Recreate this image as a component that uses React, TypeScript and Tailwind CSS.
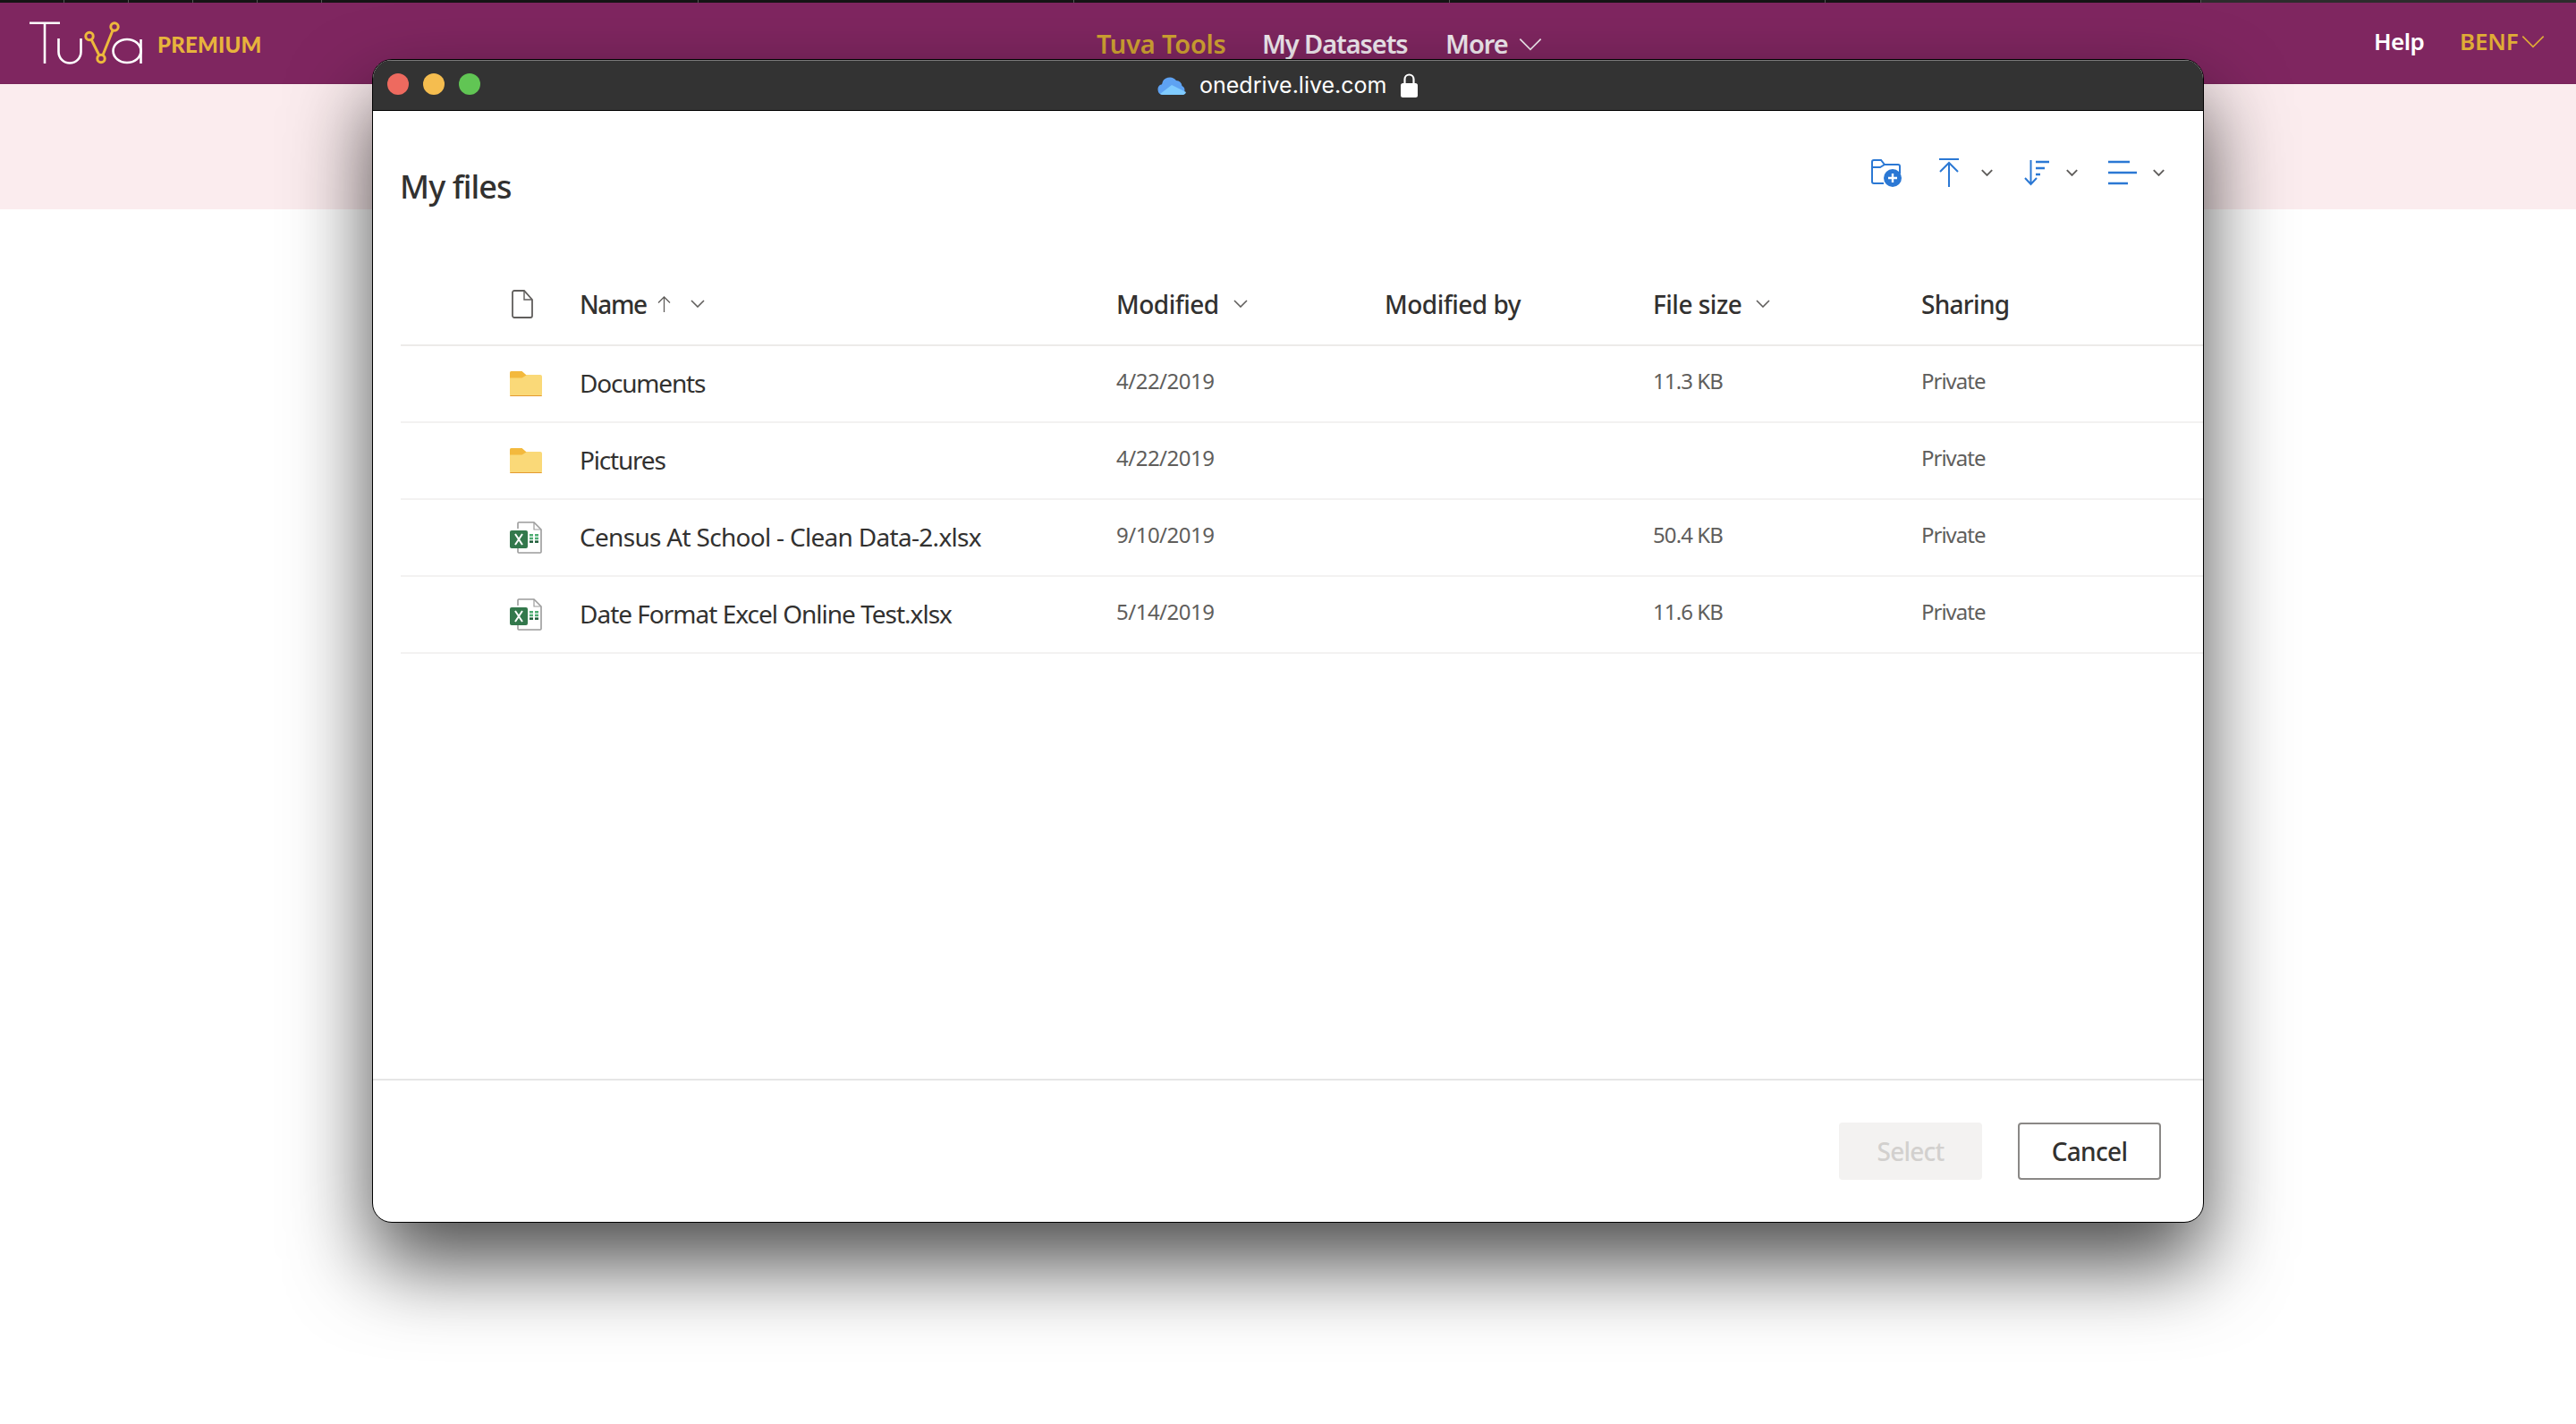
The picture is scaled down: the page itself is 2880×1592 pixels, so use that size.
import React from "react";

const seg = "font-['Noto_Sans','Open_Sans',sans-serif]";

function Chevron({ className, color = "#605e5c", w = 1.6 }: { className: string; color?: string; w?: number }) {
  return (
    <svg viewBox="0 0 16 9" className={className} fill="none">
      <path d="M1 1l7 7 7-7" stroke={color} strokeWidth={w} />
    </svg>
  );
}

function Logo() {
  return (
    <svg viewBox="0 0 130 50" className="w-[130px] h-[50px]" fill="none">
      <g stroke="#fff" strokeWidth="2.6">
        <path d="M1 1.800H35M18 1.800V47" />
        <path d="M33.500 19v15a12.500 12.500 0 0 0 25 0V19" />
        <ellipse cx="110" cy="33" rx="15.500" ry="13" />
        <path d="M125.500 20V47" />
      </g>
      <g stroke="#edb93c" strokeWidth="3">
        <path d="M70 20L79 38M83 37.500L94 10" />
        <circle cx="68" cy="16.500" r="4.200" />
        <circle cx="81" cy="41.500" r="4.200" />
        <circle cx="96" cy="6" r="4.200" />
      </g>
    </svg>
  );
}

function Cloud() {
  return (
    <svg viewBox="0 0 32 21" className="w-[32px] h-[21px]">
      <path d="M6 21a6 6 0 0 1-1-11.800A9 9 0 0 1 21 5a7 7 0 0 1 6.500 6A5.500 5.500 0 0 1 27 21z" fill="#5ea2f2" />
      <path d="M3 20l13-10 16 8a4 4 0 0 1-5 3H6a5 5 0 0 1-3-1z" fill="#7fcbff" />
    </svg>
  );
}

function Lock() {
  return (
    <svg viewBox="0 0 19 27" className="w-[19px] h-[27px]" fill="none">
      <path d="M4.500 12V6.500a5 5 0 0 1 10 0V12" stroke="#fff" strokeWidth="2.200" />
      <rect x="0" y="11" width="19" height="16" rx="2.500" fill="#fff" />
    </svg>
  );
}

function FolderIcon() {
  return (
    <svg viewBox="0 0 36 28" className="w-[36px] h-[28px]">
      <path d="M0 2a2 2 0 0 1 2-2h11l5 4h16a2 2 0 0 1 2 2v20a2 2 0 0 1-2 2H2a2 2 0 0 1-2-2z" fill="#fad978" />
      <path d="M0 2a2 2 0 0 1 2-2h11.500l5 4.500-5 3H0z" fill="#f3b93d" />
      <path d="M0 27h36v0a1 1 0 0 1-1 1H1a1 1 0 0 1-1-1z" fill="#e39a30" />
    </svg>
  );
}

function ExcelIcon() {
  return (
    <svg viewBox="0 0 36 36" className="w-[36px] h-[36px]" fill="none">
      <path d="M9 8V2a1 1 0 0 1 1-1h17l8 8v25a1 1 0 0 1-1 1H10a1 1 0 0 1-1-1v-4" stroke="#9c9c9c" strokeWidth="1.600" />
      <path d="M27 1v8h8" stroke="#9c9c9c" strokeWidth="1.200" />
      <g fill="#4eac72">
        <rect x="22" y="14" width="4" height="2.500" />
        <rect x="28" y="14" width="4" height="2.500" />
        <rect x="22" y="17.700" width="4" height="2.500" />
        <rect x="28" y="17.700" width="4" height="2.500" />
      </g>
      <g fill="#1d5c38">
        <rect x="22" y="21.400" width="4" height="2.500" />
        <rect x="28" y="21.400" width="4" height="2.500" />
      </g>
      <rect x="0" y="10" width="20" height="20" rx="2" fill="#33784c" />
      <path d="M6 14l8 12M14 14L6 26" stroke="#fff" strokeWidth="2" />
    </svg>
  );
}

function DocIcon() {
  return (
    <svg viewBox="0 0 24 32" className="w-[24px] h-[32px]" fill="none">
      <path d="M1 3a2 2 0 0 1 2-2h11l9 10v18a2 2 0 0 1-2 2H3a2 2 0 0 1-2-2z" stroke="#605e5c" strokeWidth="1.800" />
      <path d="M14 1v10h9" stroke="#605e5c" strokeWidth="1.400" />
    </svg>
  );
}

function ToolFolder() {
  return (
    <svg viewBox="0 0 34 31" className="w-[34px] h-[31px]" fill="none">
      <path d="M14 27H3a2 2 0 0 1-2-2V3a2 2 0 0 1 2-2h8l4 5h15a2 2 0 0 1 2 2v8" stroke="#2b78d4" strokeWidth="2" />
      <path d="M1 9h9l5-3" stroke="#2b78d4" strokeWidth="2" />
      <circle cx="24" cy="21" r="10" fill="#2b78d4" />
      <path d="M24 16v10M19 21h10" stroke="#fff" strokeWidth="2.400" />
    </svg>
  );
}

function ToolUpload() {
  return (
    <svg viewBox="0 0 24 32" className="w-[24px] h-[32px]" fill="none">
      <path d="M1 1h22M12 32V5M2 15L12 5l10 10" stroke="#2b78d4" strokeWidth="2" />
    </svg>
  );
}

function ToolSort() {
  return (
    <svg viewBox="0 0 28 29" className="w-[28px] h-[29px]" fill="none">
      <path d="M7.500 0v27M1 20l6.500 7 6.500-7" stroke="#2b78d4" strokeWidth="2" />
      <path d="M13 2h15M13 9h10M13 16h5" stroke="#2b78d4" strokeWidth="2.400" />
    </svg>
  );
}

function ToolList() {
  return (
    <svg viewBox="0 0 32 28" className="w-[32px] h-[28px]" fill="none">
      <path d="M0 2h24M0 14h32M0 26h22" stroke="#2b78d4" strokeWidth="2.400" />
    </svg>
  );
}

const rows = [
  { name: "Documents", icon: "folder", date: "4/22/2019", size: "11.3 KB", track: "tracking-[-1.2px]" },
  { name: "Pictures", icon: "folder", date: "4/22/2019", size: "", track: "tracking-[-1.2px]" },
  { name: "Census At School - Clean Data-2.xlsx", icon: "excel", date: "9/10/2019", size: "50.4 KB", track: "tracking-[-0.7px]" },
  { name: "Date Format Excel Online Test.xlsx", icon: "excel", date: "5/14/2019", size: "11.6 KB", track: "tracking-[-1px]" },
];

const ticks = [71, 143, 215, 287, 359, 780, 1200, 1620, 2040, 2460];

export default function App() {
  return (
    <div className={`relative w-[2880px] h-[1592px] overflow-hidden bg-white ${seg}`}>
      <div className="h-[3px] bg-[#141414] flex">
        {ticks.map((t, i) => (
          <div key={t} className="w-px h-[3px] bg-[#555555] shrink-0" style={{ marginLeft: i === 0 ? t : t - ticks[i - 1] - 1 }} />
        ))}
        <div className="flex-1 h-[3px] bg-[#2c2c2c]" />
      </div>
      <header className="h-[91px] bg-[#7f2660] border-b border-[#782359] flex items-start relative">
        <div className="ml-[32px] mt-[21px] flex items-start">
          <Logo />
          <span className="ml-[14px] mt-[10px] text-[24px] leading-[32px] font-black text-[#e7b33c] font-['Lato',sans-serif] tracking-[0.2px]">PREMIUM</span>
        </div>
        <nav className="absolute left-[1226px] top-[22px] flex items-center text-[29px] leading-[48px] font-semibold text-[#f0e9ee]">
          <span className="w-[185px] text-[#d0a232] tracking-[-0.2px]">Tuva Tools</span>
          <span className="w-[205px] tracking-[-1.1px]">My Datasets</span>
          <span className="w-[81px] tracking-[-1px]">More</span>
          <Chevron className="w-[28px] h-[15px]" color="#f0e9ee" w={1} />
        </nav>
        <div className="absolute left-[2654px] top-[19px] flex items-center text-[26px] leading-[48px] font-semibold text-white">
          <span className="w-[96px] tracking-[-0.6px]">Help</span>
          <span className="w-[68px] text-[#dfac36] tracking-[-0.2px]">BENF</span>
          <Chevron className="w-[28px] h-[15px]" color="#dfac36" w={1} />
        </div>
      </header>
      <div className="h-[140px] bg-[#fbecee]" />

      <div className="absolute left-[416px] top-[66px] w-[2048px] h-[1301px] rounded-[22px] border border-black bg-white overflow-hidden flex flex-col shadow-[0_46px_92px_rgba(0,0,0,0.7)]">
        <div className="h-[56px] bg-[#333333] border-t border-[#7a7a7a] flex items-center pb-[3px] relative shrink-0">
          <div className="ml-[16px] w-[24px] h-[24px] rounded-full bg-[#ee6a5f]" />
          <div className="ml-[16px] w-[24px] h-[24px] rounded-full bg-[#f5bd4f]" />
          <div className="ml-[16px] w-[24px] h-[24px] rounded-full bg-[#61c554]" />
          <div className="absolute left-[877px] top-[9px] flex items-center text-white h-[36px]">
            <Cloud />
            <span className="ml-[15px] w-[225px] text-[25px] leading-[36px] font-['Inter',sans-serif]">onedrive.live.com</span>
            <Lock />
          </div>
        </div>
        <div className="h-[1px] bg-black shrink-0" />
        <div className="flex-1 flex flex-col relative">
          <div className="h-[181px] relative shrink-0">
            <h1 className="absolute left-[30px] top-[61px] text-[36px] leading-[48px] font-medium text-[#323130] tracking-[-0.9px]">My files</h1>
            <div className="absolute right-[43px] top-[53px] flex items-center">
              <ToolFolder />
              <span className="ml-[41px]"><ToolUpload /></span>
              <Chevron className="ml-[24px] w-[13px] h-[8px]" w={2.400} />
              <span className="ml-[35px]"><ToolSort /></span>
              <Chevron className="ml-[19px] w-[13px] h-[8px]" w={2.400} />
              <span className="ml-[34px]"><ToolList /></span>
              <Chevron className="ml-[18px] w-[13px] h-[8px]" w={2.400} />
            </div>
          </div>
          <div className="ml-[31px] flex flex-col text-[#323130]">
            <div className="h-[82px] border-b-2 border-[#edebe9] pb-[11px] flex items-center text-[28px] font-medium tracking-[-0.5px]">
              <div className="w-[124px]" />
              <div className="w-[76px]"><DocIcon /></div>
              <div className="w-[600px] flex items-center">
                <span className="tracking-[-1.4px]">Name</span>
                <svg viewBox="0 0 15 18" className="ml-[12px] w-[15px] h-[18px]" fill="none"><path d="M7.500 18V1M1 7.500L7.500 1 14 7.500" stroke="#605e5c" strokeWidth="1.300" /></svg>
                <Chevron className="ml-[22px] w-[16px] h-[9px]" />
              </div>
              <div className="w-[300px] flex items-center"><span>Modified</span><Chevron className="ml-[16px] w-[16px] h-[9px]" /></div>
              <div className="w-[300px]">Modified by</div>
              <div className="w-[300px] flex items-center"><span>File size</span><Chevron className="ml-[16px] w-[16px] h-[9px]" /></div>
              <div className="tracking-[-0.7px]">Sharing</div>
            </div>
            {rows.map((r) => (
              <div key={r.name} className="h-[86px] border-b-2 border-[#f3f2f1] flex items-center">
                <div className="w-[122px]" />
                <div className="w-[78px] flex">{r.icon === "folder" ? <FolderIcon /> : <ExcelIcon />}</div>
                <div className={`w-[600px] text-[28px] -mt-[3px] ${r.track}`}>{r.name}</div>
                <div className="w-[300px] text-[24px] text-[#605e5c] tracking-[-0.5px] -mt-[6px]">{r.date}</div>
                <div className="w-[300px]" />
                <div className="w-[300px] text-[24px] text-[#605e5c] tracking-[-0.9px] -mt-[6px]">{r.size}</div>
                <div className="text-[24px] text-[#605e5c] tracking-[-1px] -mt-[6px]">Private</div>
              </div>
            ))}
          </div>
          <div className="absolute left-0 right-0 top-[1082px] h-[2px] bg-[#e6e6e6]" />
          <div className="absolute right-[47px] top-[1131px] flex gap-[40px]">
            <div className="w-[160px] h-[64px] rounded-[4px] bg-[#f3f2f1] text-[#d2d0ce] flex items-center justify-center text-[28px] font-medium tracking-[-0.8px]">Select</div>
            <div className="w-[160px] h-[64px] rounded-[4px] border-2 border-[#8a8886] text-[#323130] flex items-center justify-center text-[28px] font-medium tracking-[-0.7px]">Cancel</div>
          </div>
        </div>
      </div>
    </div>
  );
}
